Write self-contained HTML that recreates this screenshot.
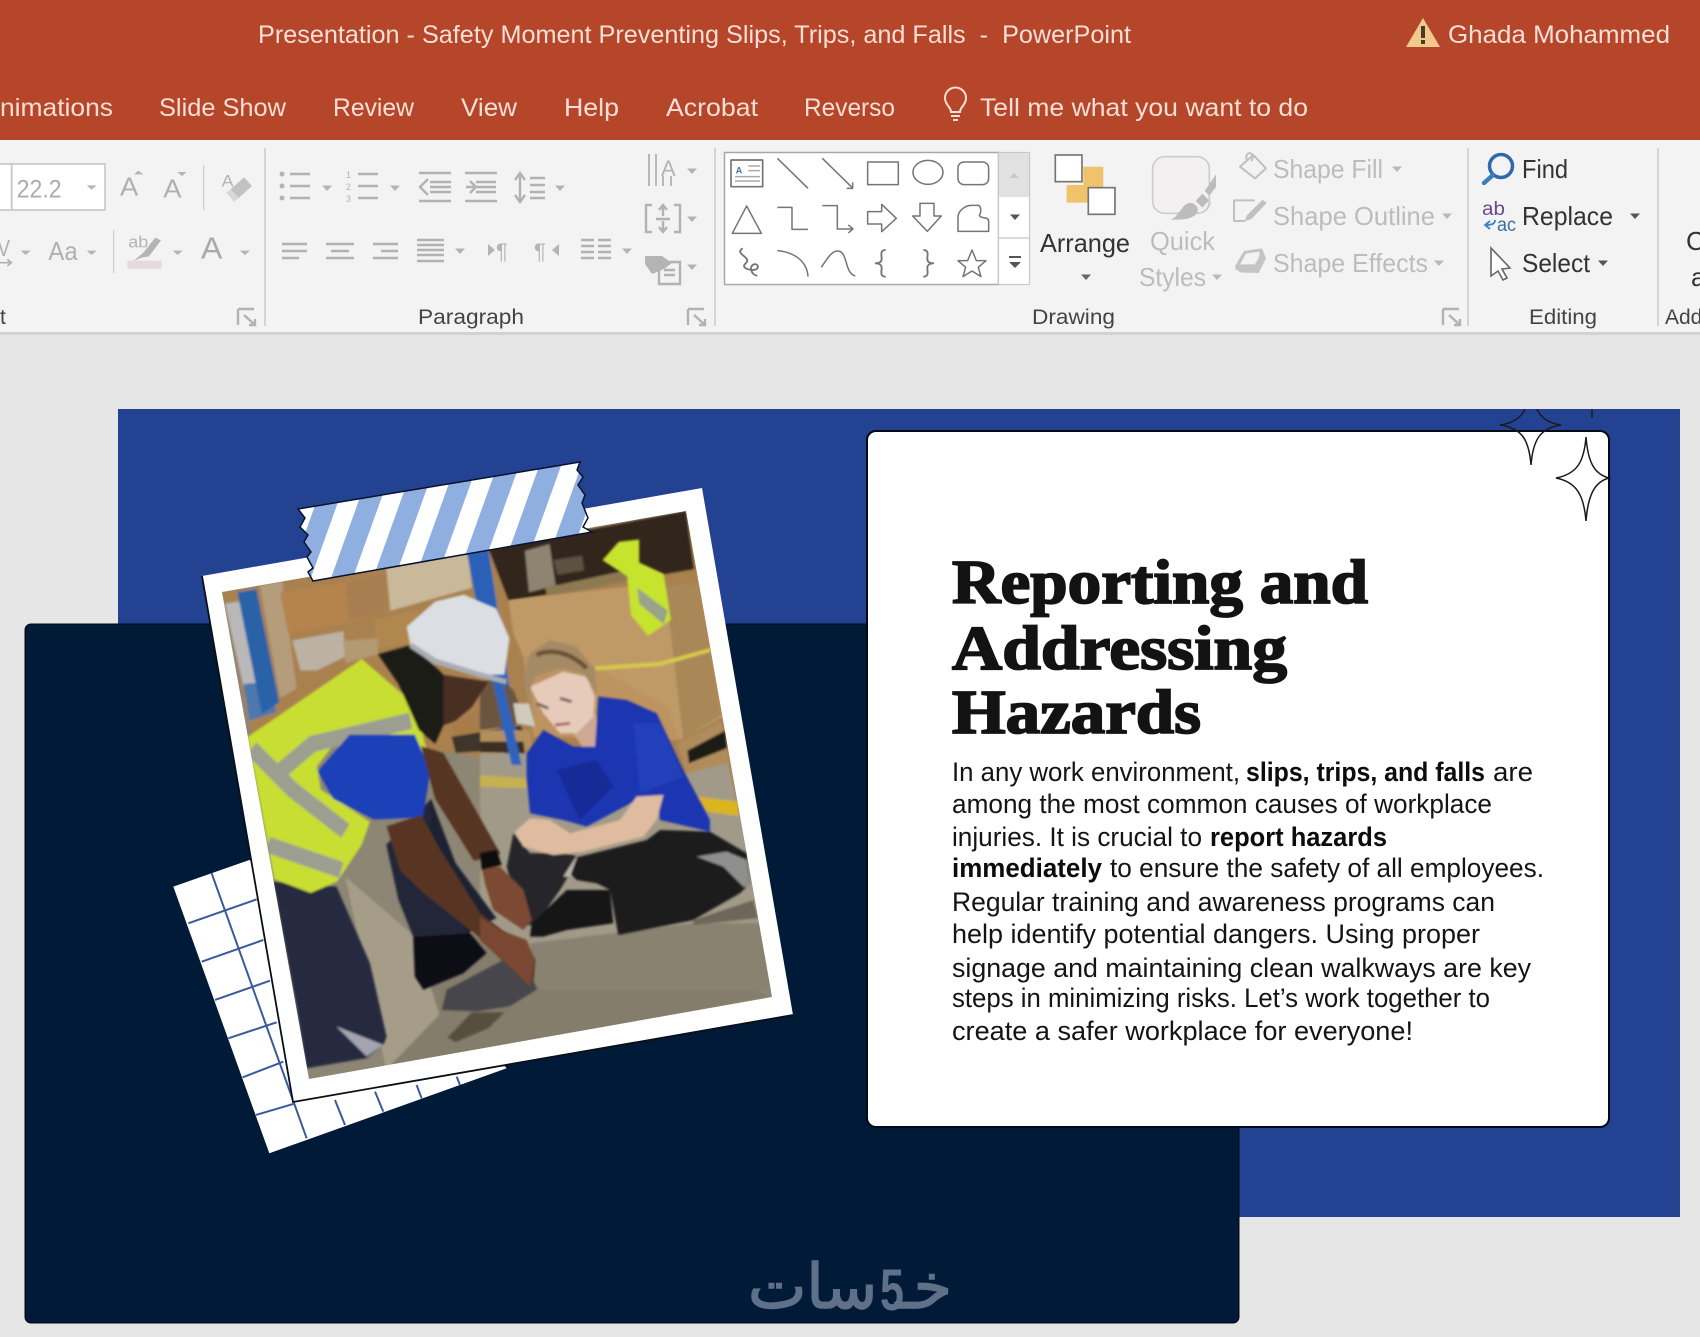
<!DOCTYPE html>
<html lang="en">
<head>
<meta charset="utf-8">
<title>Presentation - Safety Moment Preventing Slips, Trips, and Falls - PowerPoint</title>
<style>
html,body{margin:0;padding:0;width:1700px;height:1337px;overflow:hidden;background:#e6e6e6}
svg{display:block;position:absolute;left:0;top:0}
text{font-family:"Liberation Sans",sans-serif;white-space:pre}
.t{fill:#f6dfd6;font-size:25px}
.lb{fill:#444;font-size:21px}
.dk{fill:#333;font-size:26px}
.gr{fill:#bcbcbc;font-size:26px}
.b{fill:#141414;font-size:27px}
.bb{fill:#0c0c0c;font-size:27px;font-weight:bold}
.h{font-family:"Liberation Serif",serif;font-weight:bold;font-size:62px;fill:#131313;stroke:#131313;stroke-width:1.800px}
.ic{fill:none;stroke:#b2b2b2;stroke-width:2.400}
.sh{fill:none;stroke:#757575;stroke-width:4.500;stroke-linejoin:round}
</style>
</head>
<body>
<svg width="1700" height="1337" viewBox="0 0 1700 1337" xmlns="http://www.w3.org/2000/svg">
<defs>
  <path id="d" d="M-5-2.500H5L0 3Z"/>
  <clipPath id="ph"><polygon points="222,592 686,511 772,997 309,1079"/></clipPath>
  <clipPath id="tp"><polygon points="298,509 580,462 577,470 583,477 578,485 585,495 582,503 588,518 583,527 592,532 313,581 308,572 313,568 307,557 311,552 304,542 308,535 300,527 305,518"/></clipPath>
  <clipPath id="sl"><rect x="118" y="409" width="1562" height="808"/></clipPath>
  <filter id="bl" x="-5%" y="-5%" width="110%" height="110%"><feGaussianBlur stdDeviation="2.500"/></filter>
  <filter id="bw" x="-5%" y="-5%" width="110%" height="110%"><feGaussianBlur stdDeviation="3"/></filter>
</defs>

<!-- workspace -->
<rect width="1700" height="1337" fill="#e6e6e6"/>

<!-- title bar -->
<rect width="1700" height="140" fill="#b5462a"/>
<text class="t" x="258" y="43" textLength="873" lengthAdjust="spacingAndGlyphs">Presentation - Safety Moment Preventing Slips, Trips, and Falls  -  PowerPoint</text>
<path d="M1423 18L1440 47H1406Z" fill="#f2c98c"/>
<rect x="1421" y="26" width="4" height="12" fill="#4d3a24"/><rect x="1421" y="40" width="4" height="4" fill="#4d3a24"/>
<text class="t" x="1448" y="43" textLength="222" lengthAdjust="spacingAndGlyphs">Ghada Mohammed</text>

<!-- tabs -->
<text class="t" x="0" y="116" textLength="113" lengthAdjust="spacingAndGlyphs">nimations</text>
<text class="t" x="159" y="116" textLength="127" lengthAdjust="spacingAndGlyphs">Slide Show</text>
<text class="t" x="333" y="116" textLength="81" lengthAdjust="spacingAndGlyphs">Review</text>
<text class="t" x="461" y="116" textLength="56" lengthAdjust="spacingAndGlyphs">View</text>
<text class="t" x="564" y="116" textLength="55" lengthAdjust="spacingAndGlyphs">Help</text>
<text class="t" x="666" y="116" textLength="92" lengthAdjust="spacingAndGlyphs">Acrobat</text>
<text class="t" x="804" y="116" textLength="91" lengthAdjust="spacingAndGlyphs">Reverso</text>
<path d="M951 112c0-5-6-7-6-14a10.500 10.500 0 0 1 21 0c0 7-6 9-6 14zM951 116h9M953 120h5" fill="none" stroke="#f6dfd6" stroke-width="2"/>
<text class="t" x="980" y="116" textLength="328" lengthAdjust="spacingAndGlyphs">Tell me what you want to do</text>

<!-- ribbon -->
<rect y="140" width="1700" height="192" fill="#f3f3f3"/>
<rect y="332" width="1700" height="3" fill="#d2d2d2"/>
<g fill="#d4d4d4">
<rect x="264" y="148" width="2" height="178"/><rect x="714" y="148" width="2" height="178"/>
<rect x="1467" y="148" width="2" height="178"/><rect x="1657" y="148" width="2" height="178"/>
</g>

<!-- font group -->
<g transform="translate(0 150) scale(.3333)">
  <rect x="-10" y="42" width="45" height="138" fill="#fff" stroke="#c8c8c8" stroke-width="5"/>
  <rect x="35" y="42" width="280" height="138" fill="#fff" stroke="#c8c8c8" stroke-width="5"/>
  <text x="50" y="143" font-size="76" fill="#adadad" textLength="135" lengthAdjust="spacingAndGlyphs">22.2</text>
  <g fill="#b4b4b4">
    <path d="M260 106h30l-15 13z"/>
    <text x="360" y="137" font-size="78" fill="#b0b0b0" textLength="55" lengthAdjust="spacingAndGlyphs">A</text>
    <path d="M402 73l13-11 15 11z"/>
    <text x="490" y="143" font-size="78" fill="#b0b0b0" textLength="55" lengthAdjust="spacingAndGlyphs">A</text>
    <path d="M532 66h28l-14 12z"/>
    <rect x="609" y="45" width="4" height="135" fill="#d0d0d0"/>
    <text x="665" y="110" font-size="50" fill="#b4b4b4" textLength="36" lengthAdjust="spacingAndGlyphs">A</text>
    <path d="M692 118l40-36 24 26-40 36z" fill="#c2c2c2"/>
    <path d="M678 127l14-9 24 26-14 12z" fill="#d8d8d8"/>
    <text x="-8" y="318" font-size="70" fill="#b0b0b0" textLength="38" lengthAdjust="spacingAndGlyphs">V</text>
    <path d="M0 338h30M22 328l12 10-12 10" fill="none" stroke="#b0b0b0" stroke-width="5"/>
    <path d="M62 302h30l-15 13z"/>
    <text x="145" y="330" font-size="78" fill="#b0b0b0" textLength="88" lengthAdjust="spacingAndGlyphs">Aa</text>
    <path d="M260 302h30l-15 13z"/>
    <rect x="339" y="240" width="4" height="130" fill="#d0d0d0"/>
    <text x="385" y="292" font-size="50" fill="#b4b4b4" textLength="60" lengthAdjust="spacingAndGlyphs">ab</text>
    <path d="M430 308l36-45 17 8-36 48-22 4-24 10z"/>
    <rect x="382" y="332" width="103" height="24" fill="#e6dade"/>
    <path d="M518 302h30l-15 13z"/>
    <text x="603" y="325" font-size="92" fill="#a8a8a8" textLength="64" lengthAdjust="spacingAndGlyphs">A</text>
    <path d="M720 302h30l-15 13z"/>
  </g>
</g>
<path class="ic" d="M238 309v16M238 309h16M244 315l11 10M249 325h6v-6" stroke-width="1.300"/>

<!-- paragraph group -->
<g class="ic">
<path d="M290 174h20M290 186h20M290 198h20M358 174h20M358 186h20M358 198h20"/>
<path d="M419 173h32M430 182h21M430 187h21M430 192h21M419 201h32M428 179l-8 8 8 8" stroke-width="2.400"/>
<path d="M465 173h32M476 182h20M476 187h20M476 192h20M465 201h32M466 187h8M470 181l6 6-6 6" stroke-width="2.400"/>
<path d="M520 174v28M515 180l5-7 5 7M515 195l5 7 5-7M530 178h15M530 185h15M530 192h15M530 198h15"/>
<path d="M282 244h25M282 251h25M282 258h17M326 244h28M331 251h18M326 258h28M373 244h25M381 251h17M373 258h25"/>
<path d="M417 240h27M417 245h27M417 250h27M417 255h27M417 261h27" stroke-width="2.400"/>
<path d="M581 240h13M581 246h13M581 252h13M581 258h13M598 240h13M598 246h13M598 252h13M598 258h13" stroke-width="2.400"/>
<path d="M649 154v32M656 154v32M663 176v10M671 176v10" stroke-width="1.800"/>
<path d="M652 205h-6v27h6M674 205h6v27h-6M663 205v11M659 210l4-5 4 5M663 221v11M659 227l4 5 4-5M656 219h14"/>
<path d="M659 262h21v22h-21zM664 270h11M664 275h11"/>
</g>
<g fill="#b4b4b4">
<circle cx="282" cy="174" r="2.500"/><circle cx="282" cy="186" r="2.500"/><circle cx="282" cy="198" r="2.500"/>
<text x="346" y="178" font-size="9">1</text><text x="346" y="190" font-size="9">2</text><text x="346" y="202" font-size="9">3</text>
<use href="#d" x="327" y="188"/><use href="#d" x="395" y="188"/><use href="#d" x="560" y="188"/>
<use href="#d" x="692" y="171"/><use href="#d" x="692" y="219"/><use href="#d" x="692" y="267"/>
<use href="#d" x="460" y="251"/><use href="#d" x="627" y="251"/>
<text x="661" y="176" font-size="22" fill="#b4b4b4">A</text>
<path d="M645 256h17l10 7-8 6-12 5-7-10z"/>
<path d="M488 244l7 6-7 6zM559 244l-7 6 7 6z"/>
<text x="496" y="259" font-size="22" fill="#b4b4b4">¶</text>
<text x="534" y="259" font-size="22" fill="#b4b4b4">¶</text>
</g>
<text class="lb" x="418" y="324" textLength="106" lengthAdjust="spacingAndGlyphs">Paragraph</text>
<text class="lb" x="0" y="324">t</text>
<path class="ic" d="M688 309v16M688 309h16M694 315l11 10M699 325h6v-6" stroke-width="1.300"/>

<!-- shapes gallery -->
<rect x="724.500" y="152.500" width="274" height="132" fill="#fff" stroke="#a8a8a8" stroke-width="1.500"/>
<rect x="998.500" y="152.500" width="31" height="132" fill="#fff" stroke="#c8c8c8" stroke-width="1.200"/>
<rect x="999" y="153" width="30" height="44" fill="#e1e1e1"/>
<path d="M999 238h30" stroke="#c8c8c8" stroke-width="1.200"/>
<path d="M1009 178l5-5 5 5z" fill="#c8c8c8"/>
<g fill="#555"><use href="#d" x="1015" y="217"/><path d="M1009 256h12v2h-12zM1009 262h12l-6 6z"/></g>
<g transform="translate(700 130) scale(.3333)">
  <g class="sh">
   <rect x="93" y="90" width="95" height="80" stroke-width="5"/>
   <path d="M145 108h35M145 122h35M105 140h75M105 153h75" stroke="#aaa"/>
   <path d="M232 85l92 90"/>
   <path d="M367 85l90 88M458 157v18h-18"/>
   <rect x="503" y="96" width="92" height="68"/>
   <ellipse cx="684" cy="127" rx="45" ry="36"/>
   <rect x="774" y="96" width="92" height="68" rx="18"/>
   <path d="M140 228L184 310H97Z"/>
   <path d="M232 232h44v66h48"/>
   <path d="M367 227h45v70h45M445 285l14 12-14 12"/>
   <path d="M503 245h42v-22l44 42-44 40v-23h-42z"/>
   <path d="M660 220h42v38h22l-42 46-44-46h22z"/>
   <path d="M774 262c0-20 22-36 40-36h22c10 6 6 26 2 30 4 12 28 2 28 18v30h-92z"/>
   <path d="M128 355c-28 18 32 26 8 46-16 14 22 24 34 16 10-8-2-20-12-12-12 10 0 32 14 32" stroke-width="5.500"/>
   <path d="M232 362c55 5 90 35 92 78"/>
   <path d="M364 412c20-30 35-55 55-48 25 10 15 65 47 74"/>
   <path d="M557 360c-18 0-12 16-12 26 0 14-14 14-18 14 6 0 18 2 18 14 0 10-6 26 12 26" stroke-width="5.500"/>
   <path d="M670 360c18 0 12 16 12 26 0 14 14 14 18 14-6 0-18 2-18 14 0 10 6 26-12 26" stroke-width="5.500"/>
   <path d="M816 360l13 32h29l-23 20 8 28-27-17-27 17 8-28-23-20h29z"/>
  </g>
  <text x="107" y="130" font-size="28" font-weight="bold" fill="#4a76b5">A</text>
</g>

<!-- arrange -->
<g transform="translate(700 130) scale(.3333)">
  <rect x="1150" y="110" width="60" height="62" fill="#efc36c"/>
  <rect x="1100" y="165" width="65" height="53" fill="#efc36c"/>
  <rect x="1066" y="75" width="80" height="80" fill="#fff" stroke="#757575" stroke-width="5"/>
  <rect x="1165" y="173" width="80" height="80" fill="#fff" stroke="#757575" stroke-width="5"/>
</g>
<text class="dk" x="1040" y="252" textLength="90" lengthAdjust="spacingAndGlyphs">Arrange</text>
<use href="#d" x="1086" y="277" fill="#666"/>

<!-- quick styles + shape buttons -->
<g transform="translate(1130 145) scale(.3333)">
  <rect x="68" y="35" width="170" height="170" rx="36" fill="#f3f0f2" stroke="#cfcacd" stroke-width="5"/>
  <path d="M120 224c22-6 28-28 45-44 12-10 26-8 35 4 8 12 2 22-10 30-16 10-40 10-70 10z" fill="#bcbcbc"/>
  <path d="M197 168l20-22 20 20-20 22z" fill="#bcbcbc"/>
  <path d="M224 138l34-50v38l-20 26z" fill="#bcbcbc"/>
  <path d="M240 170c0 14-10 28-25 32" fill="none" stroke="#cfcacd" stroke-width="5"/>
  <g fill="none" stroke="#c0c0c0" stroke-width="6" stroke-linejoin="round">
    <path d="M330 65l40-35 38 40-33 30z"/>
    <path d="M352 46c-8-14 2-26 12-20 6 4 6 14 0 22"/>
    <path d="M312 228v-62h62M312 228h34"/>
  </g>
  <path d="M345 228l5-16 48-48 12 10-46 48z" fill="#c0c0c0"/>
  <path d="M316 362l26-44 54-8 12 30-22 44-54-2-16-10z" fill="#c4c4c4"/>
  <path d="M330 358l18-32 40-6c4 10-6 28-14 38z" fill="#f3f3f3"/>
</g>
<text class="gr" x="1150" y="250" textLength="65" lengthAdjust="spacingAndGlyphs">Quick</text>
<text class="gr" x="1139" y="286" textLength="67" lengthAdjust="spacingAndGlyphs">Styles</text>
<use href="#d" x="1217" y="277" fill="#b9b9b9"/>
<text class="lb" x="1032" y="324" textLength="83" lengthAdjust="spacingAndGlyphs">Drawing</text>
<path class="ic" d="M1443 309v16M1443 309h16M1449 315l11 10M1454 325h6v-6" stroke-width="1.300"/>

<text class="gr" x="1273" y="178" textLength="110" lengthAdjust="spacingAndGlyphs">Shape Fill</text>
<text class="gr" x="1273" y="225" textLength="162" lengthAdjust="spacingAndGlyphs">Shape Outline</text>
<text class="gr" x="1273" y="272" textLength="155" lengthAdjust="spacingAndGlyphs">Shape Effects</text>
<g fill="#b9b9b9"><use href="#d" x="1397" y="169"/><use href="#d" x="1447" y="216"/><use href="#d" x="1439" y="263"/></g>

<!-- editing -->
<circle cx="1501" cy="166" r="11.500" fill="none" stroke="#2e6aab" stroke-width="3.500"/>
<path d="M1493 175l-9 8" stroke="#3f7db8" stroke-width="4.500" stroke-linecap="round"/>
<text class="dk" x="1522" y="178" textLength="46" lengthAdjust="spacingAndGlyphs">Find</text>
<text x="1482" y="215" font-size="19" fill="#6d4a8a" textLength="23" lengthAdjust="spacingAndGlyphs">ab</text>
<text x="1497" y="231" font-size="19" fill="#3a6ea5" textLength="19" lengthAdjust="spacingAndGlyphs">ac</text>
<path d="M1495 220c0 4-3 5-10 5M1490 221l-5 4 5 4" fill="none" stroke="#3b82c4" stroke-width="1.800"/>
<text class="dk" x="1522" y="225" textLength="91" lengthAdjust="spacingAndGlyphs">Replace</text>
<use href="#d" x="1635" y="216" fill="#555"/>
<path d="M1491 248v28l7-5 5 9 4-2-5-9 8-1z" fill="#fff" stroke="#666" stroke-width="1.600"/>
<text class="dk" x="1522" y="272" textLength="68" lengthAdjust="spacingAndGlyphs">Select</text>
<use href="#d" x="1603" y="263" fill="#555"/>
<text class="lb" x="1529" y="324" textLength="68" lengthAdjust="spacingAndGlyphs">Editing</text>
<text class="dk" x="1686" y="250">C</text>
<text class="dk" x="1691" y="286">a</text>
<text class="lb" x="1665" y="324">Add</text>

<!-- slide -->
<rect x="118" y="409" width="1562" height="808" fill="#234291"/>
<rect x="25" y="624" width="1214" height="699" rx="6" fill="#001a38" stroke="#000a16" stroke-width="1"/>

<!-- card -->
<rect x="867" y="431" width="742" height="696" rx="9" fill="#fff" stroke="#020a18" stroke-width="2"/>
<g clip-path="url(#sl)" fill="none" stroke="#1a1a1a" stroke-width="1.500">
  <path d="M1531 380C1533 410 1540 422 1561 425 1540 428 1533 440 1531 465 1529 440 1522 428 1500 425 1522 422 1529 410 1531 380Z"/>
  <path d="M1586 437C1588 462 1594 474 1609 478 1594 482 1588 496 1586 521 1584 496 1577 482 1556 478 1577 474 1584 462 1586 437Z" fill="#fff"/>
  <path d="M1592 409v9"/>
</g>

<!-- title -->
<text class="h" x="952" y="603" textLength="416" lengthAdjust="spacingAndGlyphs">Reporting and</text>
<text class="h" x="952" y="669" textLength="335" lengthAdjust="spacingAndGlyphs">Addressing</text>
<text class="h" x="952" y="733" textLength="249" lengthAdjust="spacingAndGlyphs">Hazards</text>

<!-- body -->
<text class="b" x="952" y="781" textLength="288" lengthAdjust="spacingAndGlyphs">In any work environment,</text>
<text class="bb" x="1246" y="781" textLength="239" lengthAdjust="spacingAndGlyphs">slips, trips, and falls</text>
<text class="b" x="1493" y="781" textLength="40" lengthAdjust="spacingAndGlyphs">are</text>
<text class="b" x="952" y="813" textLength="540" lengthAdjust="spacingAndGlyphs">among the most common causes of workplace</text>
<text class="b" x="952" y="846" textLength="250" lengthAdjust="spacingAndGlyphs">injuries. It is crucial to</text>
<text class="bb" x="1210" y="846" textLength="177" lengthAdjust="spacingAndGlyphs">report hazards</text>
<text class="bb" x="952" y="877" textLength="150" lengthAdjust="spacingAndGlyphs">immediately</text>
<text class="b" x="1110" y="877" textLength="434" lengthAdjust="spacingAndGlyphs">to ensure the safety of all employees.</text>
<text class="b" x="952" y="911" textLength="543" lengthAdjust="spacingAndGlyphs">Regular training and awareness programs can</text>
<text class="b" x="952" y="943" textLength="528" lengthAdjust="spacingAndGlyphs">help identify potential dangers. Using proper</text>
<text class="b" x="952" y="977" textLength="579" lengthAdjust="spacingAndGlyphs">signage and maintaining clean walkways are key</text>
<text class="b" x="952" y="1007" textLength="538" lengthAdjust="spacingAndGlyphs">steps in minimizing risks. Let’s work together to</text>
<text class="b" x="952" y="1040" textLength="461" lengthAdjust="spacingAndGlyphs">create a safer workplace for everyone!</text>

<!-- grid paper -->
<g transform="translate(170 850) scale(.3333)">
  <polygon points="10,110 238,30 700,300 1010,655 298,910" fill="#fff"/>
  <g stroke="#3a5a9c" stroke-width="6" fill="none">
    <path d="M125,70L410,865M495,750L525,825M615,725L640,785M740,705L755,745M860,680L870,705"/>
    <path d="M55,220L260,148M95,335L280,270M135,450L300,392M175,565L320,517M218,682L340,635M258,795L370,762"/>
  </g>
</g>

<!-- frame -->
<polygon points="202,576 702,488 793,1015 293,1102" fill="#fff"/>
<path d="M202,576L293,1102L793,1015" fill="none" stroke="#0a0f18" stroke-width="1.800"/>

<!-- photo -->
<g clip-path="url(#ph)">
  <!-- background, warehouse -->
  <g transform="translate(170 450) scale(.408 .459)" filter="url(#bl)">
    <rect x="100" y="100" width="1400" height="1300" fill="#8d8674"/>
    <polygon points="128,310 1265,132 1400,780 700,660 200,620" fill="#a9814f"/>
    <polygon points="530,1100 1000,1000 1470,1190 530,1350" fill="#857d6c"/>
    <polygon points="430,930 600,1060 660,1230 530,1350" fill="#a69d88"/>
    <polygon points="135,335 170,330 225,510 180,515" fill="#b9b9b9"/>
    <polygon points="180,510 232,505 262,570 195,590" fill="#4d78ad"/>
    <polygon points="165,310 212,303 268,550 225,575" fill="#2c62a8"/>
    <polygon points="220,295 275,285 310,520 270,540" fill="#b59c7a"/>
    <polygon points="270,310 450,285 470,370 290,400" fill="#b5834e"/>
    <polygon points="300,415 425,395 430,450 360,480 320,480" fill="#bcb2a4"/>
    <polygon points="530,255 730,225 740,300 540,350" fill="#c9b99a"/>
    <polygon points="430,290 530,270 520,350 440,370" fill="#a87d50"/>
    <polygon points="500,370 610,350 590,420 510,430" fill="#b08850"/>
    <polygon points="425,415 510,410 510,445 430,465" fill="#b39a70"/>
    <polygon points="780,215 1265,132 1285,260 830,330" fill="#33281f"/>
    <polygon points="870,220 930,205 945,295 880,310" fill="#8f8472"/>
    <polygon points="940,240 1010,230 1015,262 950,272" fill="#5d5143"/>
    <polygon points="920,300 1120,262 1125,285 925,320" fill="#8d7a52"/>
    <polygon points="690,600 780,560 790,600 700,625" fill="#a67c48"/>
    <polygon points="690,625 860,600 880,650 700,660" fill="#3f342a"/>
    <polygon points="728,225 780,215 860,680 825,685" fill="#2a60b8"/>
  </g>
  <!-- background around woman -->
  <g transform="translate(480 590) scale(.3333)" filter="url(#bw)">
    <polygon points="85,30 440,-10 560,-10 670,-20 730,380 600,450 560,350 345,230 130,200 100,130" fill="#c09a66"/>
    <polygon points="555,-10 660,-20 725,375 610,445" fill="#a98757"/>
    <polygon points="130,200 345,230 560,350 600,450 160,440" fill="#bd9360"/>
    <path d="M345,235L540,222L690,180" stroke="#d8c94a" stroke-width="12" fill="none"/>
    <polygon points="590,460 725,395 748,520 620,550" fill="#b08c5c"/>
    <polygon points="622,482 735,422 740,475 627,520" fill="#1f1a16"/>
    <polygon points="0,490 140,490 620,550 745,520 830,900 880,1200 160,1200 0,1000" fill="#a29a88"/>
    <polygon points="150,1060 640,1000 860,1000 880,1200 160,1200" fill="#89826f"/>
    <polygon points="0,420 150,420 160,490 0,480" fill="#b38f5c"/>
    <polygon points="0,455 130,455 135,490 0,485" fill="#3a2e24"/>
    <polygon points="0,280 40,260 100,300 140,400 0,420" fill="#6b5440"/>
    <polygon points="100,340 150,340 165,410 110,400" fill="#d0cbbd"/>
    <polygon points="650,620 775,635 775,678 680,665" fill="#dcb41f"/>
    <polygon points="0,555 140,565 140,595 0,590" fill="#c6b050"/>
    <polygon points="35,260 70,280 125,525 95,525" fill="#2d63bd"/>
    <polygon points="640,990 820,930 835,985 640,1005" fill="#6e6658"/>
  </g>
  <!-- hi-vis jacket hanging on the boxes -->
  <g transform="translate(170 450) scale(.408 .459)" filter="url(#bl)">
    <polygon points="1060,240 1100,200 1150,195 1150,245 1210,270 1228,370 1172,405 1130,360 1120,275" fill="#c6e32e"/>
    <polygon points="1145,300 1220,350 1210,380 1150,335" fill="#9aa28a"/>
  </g>
  <!-- man -->
  <g transform="translate(170 450) scale(.408 .459)" filter="url(#bl)">
    <polygon points="253,940 408,951 490,1118 531,1278 523,1296 482,1325 335,1347 310,1212" fill="#252c3f"/>
    <polygon points="408,1256 523,1296 482,1321" fill="#a4a4b0"/>
    <polygon points="530,860 640,760 700,920 735,1052 596,1060 560,980" fill="#202838"/>
    <polygon points="640,760 700,900 800,1020 730,1052 640,900" fill="#1a2231"/>
    <polygon points="596,1060 735,1052 776,1096 719,1140 621,1176 600,1147" fill="#101114"/>
    <polygon points="190,625 470,455 600,555 640,690 590,640 420,620 360,690 370,740 490,810 470,860 410,940 345,965 255,935 225,790" fill="#c8de30"/>
    <path d="M200,650L300,740L430,830M270,700L350,640L590,590" stroke="#9c9f90" stroke-width="36" fill="none"/>
    <path d="M240,860L420,915" stroke="#9c9f90" stroke-width="36" fill="none"/>
    <polygon points="362,700 440,620 600,620 638,700 620,800 500,805 400,760" fill="#1f3fb8"/>
    <polygon points="615,645 670,660 810,880 745,895 650,760" fill="#573522"/>
    <polygon points="531,820 615,795 662,871 760,1009 833,1060 860,1090 895,1110 890,1170 833,1129 776,1074 621,965 564,915" fill="#583524"/>
    <polygon points="666,1220 678,1176 817,1111 880,1135 900,1175 833,1212 752,1223" fill="#46474c"/>
    <polygon points="680,1280 740,1225 820,1225 780,1260 700,1290" fill="#57503f"/>
    <polygon points="510,445 590,425 660,480 690,510 670,600 650,640 610,610 560,510" fill="#1f1a18"/>
    <polygon points="670,490 780,505 740,560 700,590 670,600" fill="#4a2e22"/>
    <polygon points="580,385 650,330 720,315 800,345 832,410 820,490 750,490 650,465 590,430" fill="#dbdee2"/>
    <path d="M590,425L650,460L760,490L825,505" stroke="#a9adb3" stroke-width="12" fill="none"/>
  </g>
  <!-- woman -->
  <g transform="translate(480 590) scale(.3333)" filter="url(#bw)">
    <polygon points="280,430 345,370 360,440 375,500 320,490" fill="#cda893"/>
    <polygon points="140,490 190,420 280,470 345,470 355,320 440,330 530,370 610,540 690,690 690,725 540,690 530,620 470,630 320,710 250,690 150,670 140,560" fill="#1c34b0"/>
    <polygon points="460,400 540,400 610,560 480,610" fill="#2240ba"/>
    <polygon points="230,540 350,510 400,590 300,690" fill="#192c98"/>
    <polygon points="150,290 250,245 320,260 345,320 340,380 290,430 240,430 190,370" fill="#e6cbbb"/>
    <polygon points="130,260 150,190 210,150 290,170 345,240 350,310 310,250 240,235 165,260 150,300 165,400 145,330" fill="#a48a65"/>
    <path d="M170,195C210,175 270,185 320,235" stroke="#6e5136" stroke-width="14" fill="none"/>
    <path d="M170,340L205,355M240,325L275,335" stroke="#75635a" stroke-width="9" fill="none"/>
    <path d="M225,405L270,400" stroke="#a96a62" stroke-width="9" fill="none"/>
    <polygon points="80,830 100,730 150,790 250,790 300,800 240,900 170,1000 130,1010" fill="#28262a"/>
    <polygon points="270,850 300,800 500,750 540,720 690,725 800,790 810,880 780,910 640,990 415,1035 390,900 350,880 290,870" fill="#1c1a1b"/>
    <polygon points="650,800 740,785 800,810 810,890 790,890 730,830" fill="#8f8f8d"/>
    <polygon points="250,860 295,790 270,860" fill="#b8b4aa"/>
    <polygon points="470,620 550,615 530,690 490,740 310,785 220,795 130,770 105,725 150,685 210,690 270,730 420,690" fill="#dfbba0"/>
    <polygon points="150,1040 155,1000 260,900 390,900 400,1000 260,1020 190,1040" fill="#131315"/>
    <polygon points="5,830 60,830 130,900 155,990 130,1020 40,960 15,880" fill="#7b4a30"/>
    <polygon points="0,790 50,780 65,825 5,840" fill="#111"/>
    <polygon points="0,980 60,1020 140,1050 165,1110 150,1190 100,1140 0,1050" fill="#7a4630"/>
  </g>
</g>

<!-- tape -->
<g clip-path="url(#tp)">
  <rect x="290" y="455" width="310" height="135" fill="#fff"/>
  <path d="M353,430L292,600M395,430L334,600M437,430L376,600M479,430L418,600M521,430L460,600M563,430L502,600M605,430L544,600" stroke="#8fafe0" stroke-width="20.500" fill="none"/>
</g>
<polygon points="298,509 580,462 577,470 583,477 578,485 585,495 582,503 588,518 583,527 592,532 313,581 308,572 313,568 307,557 311,552 304,542 308,535 300,527 305,518" fill="none" stroke="#08122e" stroke-width="1.500"/>

<!-- watermark -->
<g fill="#5f7088" style="font-family:'DejaVu Sans',sans-serif">
  <text x="748" y="1308" font-size="62" stroke="#5f7088" stroke-width="1.500" style="font-family:'DejaVu Sans',sans-serif">سات</text>
  <text x="880" y="1310" font-size="58" font-weight="bold" textLength="24" lengthAdjust="spacingAndGlyphs" style="font-family:'Liberation Sans',sans-serif">5</text>
  <text x="952" y="1308" direction="rtl" font-size="62" stroke="#5f7088" stroke-width="1.500" style="font-family:'DejaVu Sans',sans-serif">خـ</text>
</g>
</svg>
</body>
</html>
